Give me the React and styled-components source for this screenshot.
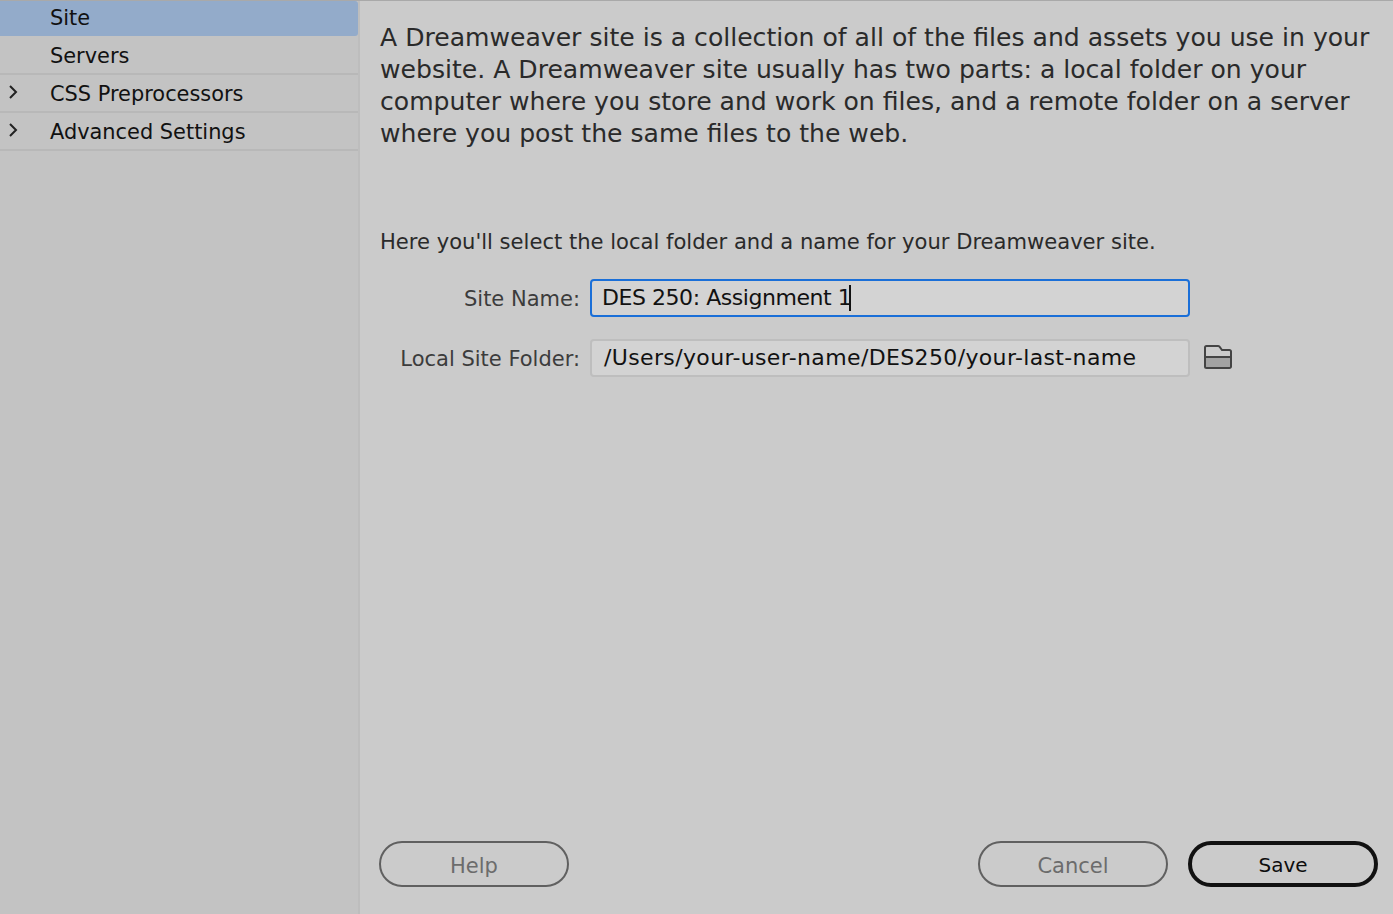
import styled, { createGlobalStyle } from "styled-components";

const GlobalStyle = createGlobalStyle`
  html, body {
    margin: 0;
    padding: 0;
    height: 100%;
    overflow: hidden;
    background: #cbcbcb;
    font-family: "DejaVu Sans", "Liberation Sans", sans-serif;
  }
`;

const Page = styled.div`
  display: flex;
  width: 1393px;
  height: 914px;
  box-sizing: border-box;
  border-top: 1px solid #a9a9a9;
`;

const Sidebar = styled.nav`
  width: 358px;
  flex-shrink: 0;
  background: #c3c3c3;
  border-right: 2px solid #bdbdbd;
`;

const Row = styled.div`
  display: flex;
  align-items: center;
  box-sizing: border-box;
  height: ${(props) => (props.$active ? "35px" : "38px")};
  margin-bottom: ${(props) => (props.$active ? "1px" : "0")};
  padding-left: 50px;
  padding-top: ${(props) => (props.$active ? "0" : "2px")};
  padding-bottom: ${(props) => (props.$active ? "2px" : "0")};
  position: relative;
  font-size: 20.9px;
  color: #111;
  background: ${(props) => (props.$active ? "#93abca" : "transparent")};
  border-bottom: ${(props) => (props.$active ? "none" : "2px solid #b8b8b8")};
  border-radius: ${(props) => (props.$active ? "0 3px 3px 0" : "0")};
`;

const Chevron = styled.svg`
  position: absolute;
  left: 8px;
  top: 9px;
`;

const Main = styled.main`
  flex: 1;
  display: flex;
  flex-direction: column;
  padding: 21px 15px 27px 20px;
  min-width: 0;
`;

const Intro = styled.p`
  margin: 0;
  font-size: 25.1px;
  line-height: 32px;
  color: #2a2a2a;
`;

const Hint = styled.p`
  margin: 77px 0 0;
  font-size: 21.08px;
  line-height: 30px;
  color: #2a2a2a;
`;

const Form = styled.div`
  display: grid;
  grid-template-columns: 200px 600px auto;
  column-gap: 10px;
  row-gap: 22px;
  align-items: center;
  margin-top: 22px;
`;

const Label = styled.label`
  padding-top: 2px;
  font-size: 21px;
  text-align: right;
  color: #3c3c3c;
`;

const Field = styled.div`
  display: flex;
  align-items: center;
  box-sizing: border-box;
  height: 38px;
  padding: 0 0 2px ${(props) => (props.$focused ? "10px" : "12px")};
  font-size: 22px;
  letter-spacing: ${(props) => (props.$focused ? "-0.45px" : "0.36px")};
  color: #111;
  background: #d3d3d3;
  border-radius: 4px;
  border: ${(props) =>
    props.$focused ? "2px solid #1a6fd8" : "2px solid #bebebe"};
`;

const Caret = styled.span`
  display: inline-block;
  width: 2px;
  height: 26px;
  margin: 2px 0 0 -2px;
  background: #111;
`;

const Actions = styled.div`
  display: flex;
  margin-top: auto;
  gap: 20px;
`;

const Button = styled.button`
  width: 190px;
  height: 46px;
  box-sizing: border-box;
  padding: ${(props) => (props.$primary ? "1px 0 0" : "3px 0 0")};
  font-family: inherit;
  font-size: ${(props) => (props.$primary ? "20px" : "21px")};
  background: transparent;
  border-radius: 23px;
  color: ${(props) => (props.$primary ? "#0d0d0d" : "#6c6c6c")};
  border: ${(props) =>
    props.$primary ? "4px solid #111" : "2px solid #606060"};
  &:first-child {
    margin-left: -1px;
    margin-right: auto;
  }
`;

const items = [
  { label: "Site", active: true },
  { label: "Servers" },
  { label: "CSS Preprocessors", arrow: true },
  { label: "Advanced Settings", arrow: true },
];

const App = () => {
  return (
    <Page>
      <GlobalStyle />
      <Sidebar>
        {items.map((item) => (
          <Row key={item.label} $active={item.active}>
            {item.arrow && (
              <Chevron width="10" height="16" viewBox="0 0 10 16" fill="none" stroke="#222" strokeWidth="2">
                <polyline points="2,2 8,8 2,14" />
              </Chevron>
            )}
            {item.label}
          </Row>
        ))}
      </Sidebar>
      <Main>
        <Intro>
          A Dreamweaver site is a collection of all of the files and assets you use in your
          website. A Dreamweaver site usually has two parts: a local folder on your
          computer where you store and work on files, and a remote folder on a server
          where you post the same files to the web.
        </Intro>
        <Hint>Here you'll select the local folder and a name for your Dreamweaver site.</Hint>
        <Form>
          <Label>Site Name:</Label>
          <Field $focused>
            DES 250: Assignment 1<Caret />
          </Field>
          <span />
          <Label>Local Site Folder:</Label>
          <Field>/Users/your-user-name/DES250/your-last-name</Field>
          <svg width="34" height="26" viewBox="0 0 34 26" fill="none">
            <path d="M5 12h26v9.500a1.500 1.500 0 0 1-1.500 1.500h-23A1.500 1.500 0 0 1 5 21.500z" fill="#a3a3a3" />
            <path
              d="M5 12V2.500A1.500 1.500 0 0 1 6.500 1h11.500a2 2 0 0 1 1.500 .7L22 5h7.500A1.500 1.500 0 0 1 31 6.500v15a1.500 1.500 0 0 1-1.500 1.500h-23A1.500 1.500 0 0 1 5 21.500zM5 12h26"
              stroke="#444"
              strokeWidth="2"
            />
          </svg>
        </Form>
        <Actions>
          <Button>Help</Button>
          <Button>Cancel</Button>
          <Button $primary>Save</Button>
        </Actions>
      </Main>
    </Page>
  );
};

export default App;
